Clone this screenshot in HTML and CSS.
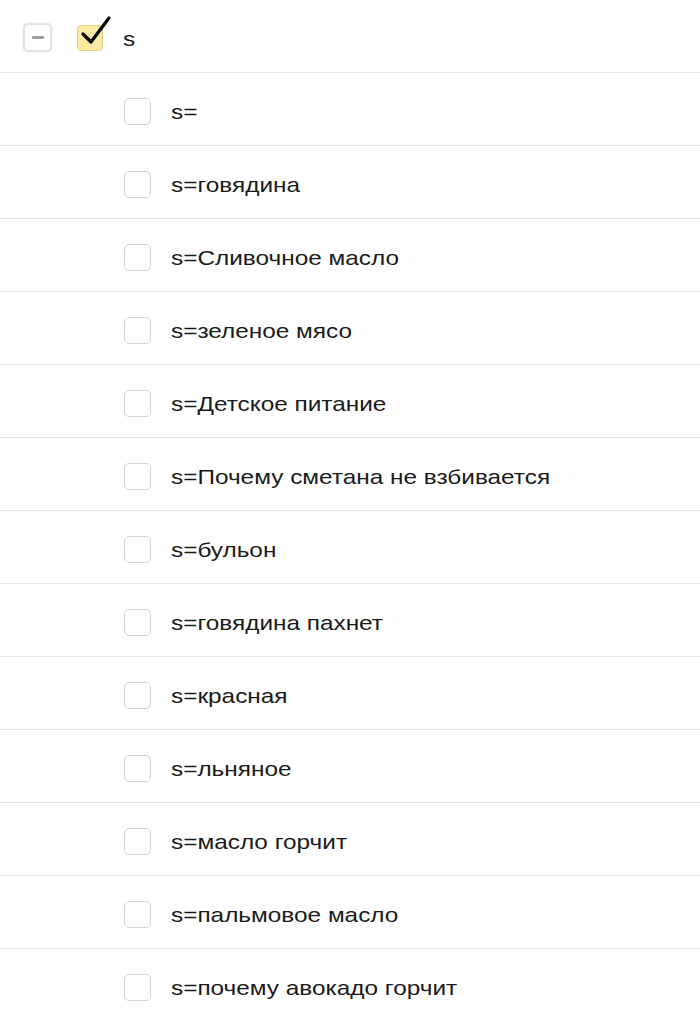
FILE: index.html
```html
<!DOCTYPE html>
<html>
<head>
<meta charset="utf-8">
<link rel="stylesheet" href="styles.css">
</head>
<body>
<div class="tree">
  <div class="row head">
    <span class="box minus"><span class="bar"></span></span>
    <span class="box checked">
      <svg class="tick" width="34" height="34" viewBox="0 0 34 34"><path d="M4 19 L12 27 L30 3" fill="none" stroke="#000" stroke-width="3.2" stroke-linecap="round" stroke-linejoin="round"/></svg>
    </span>
    <span class="label">s</span>
  </div>
  <div class="row child"><span class="box empty"></span><span class="label">s=</span></div>
  <div class="row child"><span class="box empty"></span><span class="label">s=говядина</span></div>
  <div class="row child"><span class="box empty"></span><span class="label">s=Сливочное масло</span></div>
  <div class="row child"><span class="box empty"></span><span class="label">s=зеленое мясо</span></div>
  <div class="row child"><span class="box empty"></span><span class="label">s=Детское питание</span></div>
  <div class="row child"><span class="box empty"></span><span class="label">s=Почему сметана не взбивается</span></div>
  <div class="row child"><span class="box empty"></span><span class="label">s=бульон</span></div>
  <div class="row child"><span class="box empty"></span><span class="label">s=говядина пахнет</span></div>
  <div class="row child"><span class="box empty"></span><span class="label">s=красная</span></div>
  <div class="row child"><span class="box empty"></span><span class="label">s=льняное</span></div>
  <div class="row child"><span class="box empty"></span><span class="label">s=масло горчит</span></div>
  <div class="row child"><span class="box empty"></span><span class="label">s=пальмовое масло</span></div>
  <div class="row child"><span class="box empty"></span><span class="label">s=почему авокадо горчит</span></div>
</div>
</body>
</html>
```
FILE: styles.css
```css
html, body {
  margin: 0;
  padding: 0;
  background: #fff;
}
body {
  font-family: "Liberation Sans", Arial, sans-serif;
  color: #1a1a1a;
  overflow: hidden;
}
.tree {
  display: flex;
  flex-direction: column;
}
.row {
  display: flex;
  align-items: center;
  height: 72px;
  box-sizing: border-box;
  padding-top: 4px;
  border-bottom: 1px solid #e6e6e6;
  box-sizing: content-box;
}
.row {
  height: 68px;
}
.head {
  padding-left: 23px;
  padding-top: 3px;
  height: 69px;
}
.child {
  padding-left: 124px;
}
.box {
  display: inline-flex;
  align-items: center;
  justify-content: center;
  box-sizing: border-box;
  flex: none;
  position: relative;
}
.minus {
  width: 29px;
  height: 29px;
  border: 2px solid #e2e2e2;
  border-radius: 5px;
  box-shadow: 0 0 2px rgba(0,0,0,0.12);
}
.bar {
  width: 12px;
  height: 3px;
  background: #9e9e9e;
  border-radius: 1px;
}
.checked {
  width: 26px;
  height: 26px;
  margin-left: 25px;
  background: #fdeaa3;
  border: 1px solid #e3cf86;
  border-radius: 4px;
}
.tick {
  position: absolute;
  left: 1px;
  top: -11px;
}
.empty {
  width: 27px;
  height: 27px;
  border: 1px solid #d3d3d3;
  border-radius: 5px;
}
.label {
  display: inline-block;
  font-size: 21px;
  line-height: 24px;
  margin-left: 20px;
  margin-top: 2px;
  white-space: nowrap;
  transform: scaleX(1.16);
  transform-origin: left center;
}
```
